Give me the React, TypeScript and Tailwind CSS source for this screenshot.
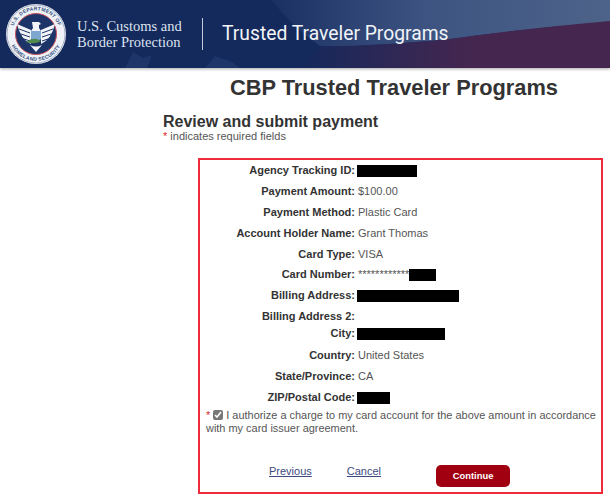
const rows: { label: string; value?: string; block?: number; prefix?: string; shift?: string }[] = [
  { label: "Agency Tracking ID:", block: 60 },
  { label: "Payment Amount:", value: "$100.00" },
  { label: "Payment Method:", value: "Plastic Card" },
  { label: "Account Holder Name:", value: "Grant Thomas" },
  { label: "Card Type:", value: "VISA" },
  { label: "Card Number:", prefix: "************", block: 27, shift: "-mt-[1px]" },
  { label: "Billing Address:", block: 102 },
  { label: "Billing Address 2:" },
  { label: "City:", block: 88, shift: "-mt-[4px] mb-[1px]" },
  { label: "Country:", value: "United States" },
  { label: "State/Province:", value: "CA" },
  { label: "ZIP/Postal Code:", block: 33 },
];

const Seal = () => (
  <svg width="60" height="60" viewBox="0 0 60 60" className="shrink-0">
    <defs>
      <path id="sealTop" d="M6.5 33.8 A23.8 23.8 0 1 1 53.5 33.8" />
      <path id="sealBottom" d="M3 33 A27.2 27.2 0 0 0 57 33" />
    </defs>
    <circle cx="30" cy="30" r="30" fill="#eef1f5" />
    <circle cx="30" cy="30" r="29" fill="none" stroke="#8795b0" strokeWidth="0.7" />
    <text fontSize="5" fontWeight="700" letterSpacing="0.25" fill="#34507f" fontFamily="Liberation Sans, sans-serif">
      <textPath href="#sealTop" startOffset="50%" textAnchor="middle">U.S. DEPARTMENT OF</textPath>
    </text>
    <text fontSize="5" fontWeight="700" letterSpacing="0.25" fill="#34507f" fontFamily="Liberation Sans, sans-serif">
      <textPath href="#sealBottom" startOffset="50%" textAnchor="middle">HOMELAND SECURITY</textPath>
    </text>
    <circle cx="30" cy="30" r="20.5" fill="#1c3468" stroke="#c8505a" strokeWidth="1" />
    <path d="M11 20 Q18 23 25 26 L25 40 Q15 36 11 20Z M49 20 Q42 23 35 26 L35 40 Q45 36 49 20Z" fill="#f2f4f8" />
    <path d="M13 25 L24 29 M15 30 L24 33 M18 35 L24 37 M47 25 L36 29 M45 30 L36 33 M42 35 L36 37" stroke="#1c3468" strokeWidth="1" />
    <path d="M26 18 h7 l2 2 -2 1 v3 l2 3 h-10 l2 -3z" fill="#f2f4f8" />
    <path d="M25 27 h10 v8 q-5 5 -10 0z" fill="#7fa8d0" />
    <path d="M20 38 q8 -6 15 -1 q-6 4 -15 1z" fill="#4f8a4a" />
    <path d="M24 41 q6 3 12 0 l-6 7z" fill="#f2f4f8" />
  </svg>
);

export default function App() {
  return (
    <div className="w-[610px] h-[501px] overflow-hidden bg-white font-['Liberation_Sans',Arial,sans-serif] text-[#333]">
      {/* Banner */}
      <header className="relative h-[68px] overflow-hidden bg-[#14295c] flex items-center pl-[6px] shadow-[0_1px_3px_rgba(0,0,0,0.35)]">
        <svg className="absolute inset-0" width="610" height="68" viewBox="0 0 610 68">
          <defs>
            <linearGradient id="sky" x1="0" x2="1" y1="0" y2="0">
              <stop offset="0" stopColor="#1a3063" />
              <stop offset="0.45" stopColor="#3d5482" />
              <stop offset="1" stopColor="#4d6389" />
            </linearGradient>
            <linearGradient id="wine" x1="0" x2="1" y1="0" y2="0">
              <stop offset="0" stopColor="#14295c" />
              <stop offset="0.55" stopColor="#45264f" />
              <stop offset="1" stopColor="#45264f" />
            </linearGradient>
          </defs>
          <path d="M272 0 H610 V22 Q520 29 450 39 Q370 47 320 46 Q290 25 272 0Z" fill="url(#sky)" />
          <path d="M610 21 Q520 29 450 39 Q370 47 320 46 L300 68 H610Z" fill="url(#wine)" />
          <path d="M133 52 L143 58 L152 55 L147 68 H125Z M215 56 L232 62 L240 68 H205Z" fill="#1d3568" />
        </svg>
        <div className="relative flex items-center">
          <Seal />
          <div className="ml-[11px] font-['Liberation_Serif',serif] text-[14.5px] leading-[16px] text-[#dde3ee] w-[120px]">
            <div>U.S. Customs and</div>
            <div>Border Protection</div>
          </div>
          <div className="ml-[5px] w-px h-[32px] bg-[#c3cbd9]" />
          <div className="ml-[19px] font-['Roboto',sans-serif] text-[19.3px] text-[#f2f4f8] leading-none whitespace-nowrap">
            Trusted Traveler Programs
          </div>
        </div>
      </header>

      <main className="pl-[163px]">
        <h1 className="pl-[67px] pt-[7px] text-[21.8px] leading-[26px] font-bold whitespace-nowrap">
          CBP Trusted Traveler Programs
        </h1>
        <h2 className="mt-[11px] text-[16px] leading-[20px] font-bold whitespace-nowrap">Review and submit payment</h2>
        <p className="-mt-[1px] text-[11px] leading-[10px] text-[#555]">
          <span className="text-[#d9262e]">*</span> indicates required fields
        </p>

        {/* Review box */}
        <section className="mt-[17px] ml-[35px] w-[405px] h-[336px] border-[2px] border-[#ee2a3b]">
          <div className="flex flex-col">
            {rows.map((row) => (
              <div key={row.label} className={`h-[21px] flex items-center text-[11px] ${row.shift ?? ""}`}>
                <span className="w-[155px] text-right font-bold text-[#333] whitespace-nowrap">{row.label}</span>
                <span className="ml-[2px] flex items-center text-[#555] whitespace-nowrap">
                  {row.prefix || row.value ? <span className="pl-[1px]">{row.prefix}{row.value}</span> : null}
                  {row.block ? <span className="h-[12px] bg-black" style={{ width: row.block }} /> : null}
                </span>
              </div>
            ))}
          </div>
          <p className="mt-[1px] pl-[6px] text-[10.95px] leading-[13px] text-[#555]">
            <span className="text-[#d9262e]">*</span>
            <input type="checkbox" defaultChecked readOnly className="mx-[3px] w-[10px] h-[10px] align-[-1px] accent-[#777]" />
            I authorize a charge to my card account for the above amount in accordance with my card issuer agreement.
          </p>
          <div className="mt-[28px] flex items-start text-[11px] leading-[16px] text-[#3c4a80]">
            <a className="ml-[69px] underline">Previous</a>
            <a className="ml-[35px] underline">Cancel</a>
            <button className="ml-[55px] mt-[2px] w-[74px] h-[22px] rounded-[5px] bg-[#a00010] text-white text-[9.4px] font-bold">
              Continue
            </button>
          </div>
        </section>
      </main>
    </div>
  );
}
